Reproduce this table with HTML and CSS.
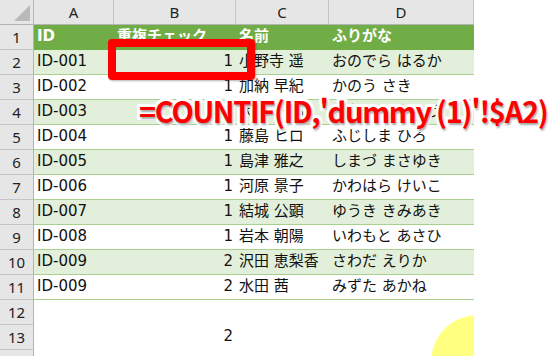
FILE: index.html
```html
<!DOCTYPE html>
<html lang="ja">
<head>
<meta charset="utf-8">
<title>重複チェック</title>
<link rel="stylesheet" href="styles.css">
</head>
<body>
<div class="page">
  <div class="sheet">
    <div class="grid">
      <div class="corner"><svg width="33" height="24" viewBox="0 0 33 24"><polygon points="30,5 30,21 14,21" fill="#b9b9b9"/></svg></div>
      <div class="ch">A</div><div class="ch">B</div><div class="ch">C</div><div class="ch">D</div>

      <div class="rh">1</div><div class="c hd">ID</div><div class="c hd">重複チェック</div><div class="c hd">名前</div><div class="c hd">ふりがな</div>
      <div class="rh">2</div><div class="c ev">ID-001</div><div class="c ev num">1</div><div class="c ev">小野寺 遥</div><div class="c ev">おのでら はるか</div>
      <div class="rh">3</div><div class="c od">ID-002</div><div class="c od num">1</div><div class="c od">加納 早紀</div><div class="c od">かのう さき</div>
      <div class="rh">4</div><div class="c ev">ID-003</div><div class="c ev num">1</div><div class="c ev">大野 一郎</div><div class="c ev">おおの いちろう</div>
      <div class="rh">5</div><div class="c od">ID-004</div><div class="c od num">1</div><div class="c od">藤島 ヒロ</div><div class="c od">ふじしま ひろ</div>
      <div class="rh">6</div><div class="c ev">ID-005</div><div class="c ev num">1</div><div class="c ev">島津 雅之</div><div class="c ev">しまづ まさゆき</div>
      <div class="rh">7</div><div class="c od">ID-006</div><div class="c od num">1</div><div class="c od">河原 景子</div><div class="c od">かわはら けいこ</div>
      <div class="rh">8</div><div class="c ev">ID-007</div><div class="c ev num">1</div><div class="c ev">結城 公顕</div><div class="c ev">ゆうき きみあき</div>
      <div class="rh">9</div><div class="c od">ID-008</div><div class="c od num">1</div><div class="c od">岩本 朝陽</div><div class="c od">いわもと あさひ</div>
      <div class="rh">10</div><div class="c ev">ID-009</div><div class="c ev num">2</div><div class="c ev">沢田 恵梨香</div><div class="c ev">さわだ えりか</div>
      <div class="rh">11</div><div class="c od">ID-009</div><div class="c od num">2</div><div class="c od">水田 茜</div><div class="c od">みずた あかね</div>
      <div class="rh">12</div><div class="c"></div><div class="c"></div><div class="c"></div><div class="c"></div>
      <div class="rh">13</div><div class="c"></div><div class="c num">2</div><div class="c"></div><div class="c"></div>
      <div class="rh">14</div><div class="c"></div><div class="c"></div><div class="c"></div><div class="c"></div>
    </div>
    <div class="blob"></div>
  </div>
  <div class="mark"></div>
  <div class="formula">=COUNTIF(ID,'dummy (1)'!$A2)</div>
</div>
</body>
</html>
```

FILE: styles.css
```css
html, body {
  margin: 0;
  padding: 0;
  background: #ffffff;
  overflow: hidden;
}

.page {
  position: relative;
  width: 555px;
  height: 356px;
  overflow: hidden;
}

.sheet {
  position: relative;
  width: 474px;
  height: 356px;
  overflow: hidden;
}

.grid {
  display: grid;
  grid-template-columns: 34px 80px 122px 93px 145px;
  grid-auto-rows: 25px;
}

.corner {
  background: #e6e6e6;
  border-right: 1px solid #b4b4b4;
  border-bottom: 1px solid #b4b4b4;
  box-sizing: border-box;
}

.corner svg {
  display: block;
}

.ch {
  background: #e6e6e6;
  border-right: 1px solid #c4c4c4;
  border-bottom: 1px solid #b4b4b4;
  box-sizing: border-box;
  font-family: "Noto Sans", sans-serif;
  font-size: 15px;
  line-height: 24px;
  color: #222;
  text-align: center;
}

.rh {
  background: #e6e6e6;
  border-right: 1px solid #b4b4b4;
  border-bottom: 1px solid #c4c4c4;
  box-sizing: border-box;
  font-family: "Noto Sans", sans-serif;
  font-size: 15px;
  line-height: 24px;
  color: #222;
  text-align: center;
}

.c {
  box-sizing: border-box;
  padding: 0 3px;
  font-family: "DejaVu Sans", "Noto Sans CJK JP", sans-serif;
  font-size: 15px;
  line-height: 22px;
  color: #111;
  white-space: nowrap;
  overflow: visible;
}

.hd {
  background: #70ad47;
  color: #ffffff;
  font-weight: 700;
}

.ev {
  background: #e2efda;
  border-bottom: 1px solid #a9d08e;
}

.od {
  background: #ffffff;
  border-bottom: 1px solid #a9d08e;
}

.num {
  text-align: right;
}

.blob {
  position: absolute;
  left: 431px;
  top: 315px;
  width: 94px;
  height: 94px;
  border-radius: 50%;
  background: #ffff80;
}

.mark {
  position: absolute;
  left: 108px;
  top: 39px;
  width: 147px;
  height: 41px;
  box-sizing: border-box;
  border: 8px solid #ff0000;
  border-radius: 4px;
  box-shadow: 1px 1px 2px rgba(0, 0, 0, 0.3);
}

.formula {
  position: absolute;
  left: 139px;
  top: 96px;
  font-family: "Noto Sans CJK JP", sans-serif;
  font-weight: 700;
  font-size: 29px;
  line-height: 29px;
  letter-spacing: -1.3px;
  color: #ff0000;
  white-space: nowrap;
  -webkit-text-stroke: 6px #ffffff;
  paint-order: stroke fill;
  text-shadow: 1px 2px 2px rgba(0, 0, 0, 0.35);
}
```
